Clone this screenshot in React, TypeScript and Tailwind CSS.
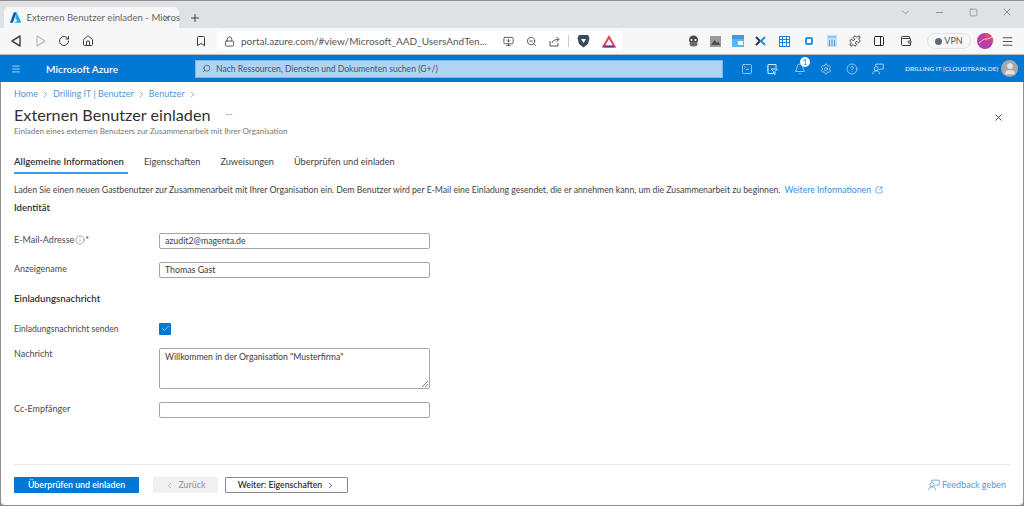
import {
  ChevronDown,
  ChevronLeft,
  ChevronRight,
  Lock,
  Minus,
  Plus,
  RotateCw,
  Search,
  Square,
  X,
  Bookmark,
  Home,
  ZoomOut,
  Settings,
  CircleHelp,
  Bell,
  SquareTerminal,
  Menu,
  Puzzle,
  PanelRight,
  Wallet,
  Check,
  Info,
  SquareArrowOutUpRight,
  User,
  MonitorDown,
} from 'lucide-react';

function Triangle({ filled }: { filled?: boolean }) {
  return (
    <svg width="12" height="14" viewBox="0 0 12 14" fill="none" stroke={filled ? '#c4c6c9' : '#4a4a4a'} strokeWidth="1.5">
      <path d={filled ? 'M2 2 L10 7 L2 12 Z' : 'M10 2 L2 7 L10 12 Z'} strokeLinejoin="round" />
    </svg>
  );
}

function AzureLogo() {
  return (
    <svg width="12" height="11" viewBox="0 0 12 11">
      <path d="M4 0 H7 L3 11 H0 Z" fill="#0a5fb4" />
      <path d="M7 0 L12 11 H4 L7.6 9.2 L5.6 6.2 Z" fill="#2aa4ea" />
    </svg>
  );
}

function FeedbackIcon({ color, size }: { color: string; size: number }) {
  return (
    <svg width={size} height={size} viewBox="0 0 16 16" fill="none" stroke={color} strokeWidth="1">
      <path d="M5 4 V1.5 H15 V8 H11 L9.5 9.5" />
      <circle cx="5.5" cy="7.5" r="2.7" />
      <path d="M1 15 C1 11.5 3 10.5 5.5 10.5 C8 10.5 10 11.5 10 15" />
    </svg>
  );
}

function Field({ label, value, info }: { label: string; value: string; info?: boolean }) {
  return (
    <div className="flex items-center h-[16px]">
      <div className="w-[145px] flex items-center text-[#4a4a4a] -mt-[2px]">
        {label}
        {info && <Info size={10} strokeWidth={1.1} className="ml-[1px]" />}
        {info && <span>*</span>}
      </div>
      <div className="w-[271px] h-[16px] border border-[#a6a6a6] rounded-[2px] px-[5px] flex items-center text-[8.8px] text-[#3b3b3b]">
        {value}
      </div>
    </div>
  );
}

export default function App() {
  return (
    <div
      className="w-[1024px] h-[506px] overflow-hidden bg-[#8f8f8f] pt-px text-[9px] leading-[12px] text-[#333]"
      style={{ fontFamily: 'Lato, "Open Sans", sans-serif' }}
    >
      {/* tab strip */}
      <div className="h-[27px] bg-[#dee1e6] flex items-end pl-[4px]">
        <div className="w-[175px] h-[21px] shrink-0 bg-[#f7f7f7] rounded-t-[5px] flex items-center pl-[6px] pr-[7px]">
          <AzureLogo />
          <span className="ml-[5px] w-[136px] whitespace-nowrap text-[9.6px] text-[#666]">Externen Benutzer einladen - Micros</span>
          <X size={10} className="text-[#555]" />
        </div>
        <Plus size={12} strokeWidth={2} className="ml-[10px] mb-[4px] text-[#3c3c3c]" />
        <div className="ml-auto flex items-center mb-[10px] pr-[11px] text-[#8b8d90]">
          <ChevronDown size={11} className="mr-[23px]" />
          <Minus size={11} className="mr-[24px]" />
          <Square size={9} className="mr-[23px]" />
          <X size={12} />
        </div>
      </div>

      {/* toolbar */}
      <div className="h-[27px] bg-[#f7f7f7] flex items-center pl-[10px] border-b border-[#bdbdbd]">
        <Triangle />
        <span className="ml-[13px]"><Triangle filled /></span>
        <RotateCw size={12} className="ml-[11px] text-[#3c3c3c]" />
        <Home size={12} className="ml-[12px] text-[#3c3c3c]" />
        <Bookmark size={12} className="ml-[101px] text-[#3c3c3c]" />
        <div className="ml-[10px] w-[405px] h-[20px] shrink-0 bg-white rounded-[3px] flex items-center pl-[7px] text-[10px] text-[#555]">
          <Lock size={11} />
          <span className="ml-[6px] w-[248px] whitespace-nowrap">portal.azure.com/#view/Microsoft_AAD_UsersAndTen...</span>
          <MonitorDown size={11} className="ml-[14px]" />
          <ZoomOut size={11} className="ml-[12px]" />
          <svg className="ml-[12px]" width="11" height="11" viewBox="0 0 11 11" fill="none" stroke="#555" strokeWidth="1">
            <path d="M1 5 V10 H9 V7" />
            <path d="M3 7 C3.5 4.5 6 3.5 9.5 3.5 M7.5 1 L10 3.5 L7.5 6" />
          </svg>
          <div className="ml-[8px] w-px h-[12px] bg-[#ccc]" />
          <svg className="ml-[8px]" width="13" height="14" viewBox="0 0 13 14">
            <path d="M2 1 H11 L12.5 4 L11 10 L6.5 13.5 L2 10 L0.5 4 Z" fill="#3c4a55" />
            <path d="M4 5 L6.5 9 L9 5 Z" fill="#fff" />
          </svg>
          <svg className="ml-[12px]" width="14" height="13" viewBox="0 0 14 13" fill="none" strokeWidth="2">
            <path d="M7 2 L12.5 11.5 H1.5 Z" stroke="#e2434b" />
            <path d="M1.5 11.5 H12.5" stroke="#6b3fa0" />
          </svg>
        </div>
        <div className="ml-[65px] flex items-center">
          {/* extensions */}
          <svg width="13" height="12" viewBox="0 0 13 12">
            <circle cx="6.5" cy="5" r="4.5" fill="#4a4a4a" />
            <ellipse cx="6.5" cy="9" rx="4" ry="2.5" fill="#6a6a6a" />
            <circle cx="4.5" cy="5" r="1" fill="#fff" />
            <circle cx="8.5" cy="5" r="1" fill="#fff" />
          </svg>
          <svg className="ml-[10px]" width="11" height="11" viewBox="0 0 11 11">
            <rect width="11" height="11" fill="#9a9a9a" />
            <path d="M1 9 L4.5 4 L7 7 L8.5 5.5 L10 9 Z" fill="#4d4d4d" />
          </svg>
          <div className="ml-[11px] w-[12px] h-[12px] bg-[#5cb5ee] flex flex-col">
            <div className="h-[4px] bg-[#3a9be0]" />
            <div className="ml-auto mt-[2px] mr-px w-[5px] h-[4px] bg-white" />
          </div>
          <svg className="ml-[11px]" width="11" height="10" viewBox="0 0 11 10" fill="none" strokeWidth="2">
            <path d="M1 1 L5 5 L1 9" stroke="#1f3a5f" />
            <path d="M10 1 L6 5 L10 9" stroke="#2e8fd8" />
          </svg>
          <div className="ml-[13px] w-[11px] h-[11px] bg-[#1e7fd6] grid grid-cols-3 gap-px p-px">
            {[0, 1, 2, 3, 4, 5, 6, 7, 8].map((i) => (
              <div key={i} className="bg-white" />
            ))}
          </div>
          <div className="ml-[13px] w-[12px] h-[12px] bg-white flex items-center justify-center">
            <div className="w-[8px] h-[8px] rounded-[2px] border-2 border-[#2196e8]" />
          </div>
          <svg className="ml-[12px]" width="10" height="12" viewBox="0 0 10 12">
            <rect width="10" height="12" fill="#c4def4" />
            <rect x="1" y="1" width="8" height="2" fill="#8fc2ec" />
            <path d="M2 5 H3 V11 H2 Z M4.5 5 H5.5 V11 H4.5 Z M7 5 H8 V11 H7 Z" fill="#5a9fd8" />
          </svg>
          <Puzzle size={12} className="ml-[12px] text-[#3c3c3c]" />
          <PanelRight size={12} className="ml-[12px] text-[#222]" />
          <Wallet size={12} className="ml-[15px] text-[#3c3c3c]" />
          <div className="ml-[15px] w-[44px] h-[16px] rounded-full border border-[#e3e3e3] flex items-center justify-center gap-[2px] text-[#555]">
            <div className="w-[7px] h-[7px] rounded-full bg-[#5f6b7a]" />
            VPN
          </div>
          <svg className="ml-[6px]" width="16" height="16" viewBox="0 0 16 16" fill="none">
            <circle cx="8" cy="8" r="8" fill="#b83fa8" />
            <path d="M8 0 A8 8 0 0 1 16 8 L8 8 Z" fill="#e0457b" />
            <path d="M2 10 C5 8 6 6 9 6 C11 6 13 5 15 4" stroke="#fff" strokeWidth="0.7" />
          </svg>
          <Menu size={13} className="ml-[8px] text-[#555]" />
        </div>
      </div>

      {/* azure bar */}
      <div className="h-[27px] bg-[#0078d4] flex items-center pl-[11px] text-white">
        <Menu size={10} className="text-[#cfe4f7] shrink-0" />
        <span className="ml-[25px] w-[149px] shrink-0 text-[10.2px] font-semibold">Microsoft Azure</span>
        <div className="w-[528px] h-[18px] shrink-0 bg-[#afd3f1] border border-[#7db6e6] flex items-center pl-[6px] text-[8.6px] text-[#44586b]">
          <Search size={9} className="-scale-x-100" />
          <span className="ml-[5px]">Nach Ressourcen, Diensten und Dokumenten suchen (G+/)</span>
        </div>
        <SquareTerminal size={12} strokeWidth={1.3} className="ml-[18px] text-[#d8eafa] shrink-0" />
        <svg className="ml-[13px] shrink-0" width="12" height="12" viewBox="0 0 12 12" fill="none" stroke="#d8eafa" strokeWidth="1">
          <path d="M7 10.5 H2 V1.5 H10 V5" />
          <path d="M2 4 H0.8 M2 7 H0.8" />
          <path d="M5 6 H11.5 L9 8.5 V11.5 L7.5 10.5 V8.5 Z" />
        </svg>
        <div className="relative ml-[16px] shrink-0">
          <Bell size={12} strokeWidth={1.3} className="text-[#d8eafa]" />
          <span className="absolute -top-[6px] left-[6px] w-[10px] h-[10px] rounded-full bg-white text-[#0078d4] text-[7px] leading-[10px] text-center">1</span>
        </div>
        <Settings size={12} strokeWidth={1.3} className="ml-[14px] text-[#d8eafa] shrink-0" />
        <CircleHelp size={12} strokeWidth={1.3} className="ml-[14px] text-[#d8eafa] shrink-0" />
        <span className="ml-[14px]"><FeedbackIcon color="#d8eafa" size={12} /></span>
        <span className="ml-[21px] w-[93px] text-[6.5px] font-semibold whitespace-nowrap text-[#dcebf9]">DRILLING IT (CLOUDTRAIN.DE)</span>
        <div className="ml-[3px] w-[17px] h-[17px] shrink-0 rounded-full bg-[#a8a8a8] flex items-center justify-center overflow-hidden">
          <User size={14} fill="#e3e3e3" className="text-[#e3e3e3]" />
        </div>
      </div>

      {/* blade */}
      <div className="ml-px mr-px h-[423px] bg-white flex flex-col rounded-b-[4px]">
        <div className="pl-[13px] pt-[6px] flex items-center gap-[3px] text-[#4f9ad9]">
          <span>Home</span>
          <ChevronRight size={9} className="text-[#888]" />
          <span>Drilling IT | Benutzer</span>
          <ChevronRight size={9} className="text-[#888]" />
          <span>Benutzer</span>
          <ChevronRight size={9} className="text-[#888]" />
        </div>
        <div className="pl-[13px] pr-[19px] mt-[5px] flex items-center">
          <span className="text-[16.2px] leading-[20px] text-[#323130]">Externen Benutzer einladen</span>
          <span className="ml-[15px] text-[#999] text-[9px] -mt-[3px]">···</span>
          <X size={11} className="ml-auto mt-[4px] text-[#444]" />
        </div>
        <div className="pl-[13px] mt-[1px] text-[8px] leading-[10px] text-[#777]">Einladen eines externen Benutzers zur Zusammenarbeit mit Ihrer Organisation</div>

        <div className="pl-[13px] mt-[20px] flex gap-[20px] text-[9.2px] text-[#444]">
          <div className="pb-[4px] pr-[4px] -mr-[4px] border-b-2 border-[#3f9be3] text-[9.6px] font-semibold text-[#323130]">Allgemeine Informationen</div>
          <div>Eigenschaften</div>
          <div>Zuweisungen</div>
          <div>Überprüfen und einladen</div>
        </div>

        <div className="pl-[13px] mt-[10px] flex items-center whitespace-nowrap text-[8.68px] text-[#444]">
          Laden Sie einen neuen Gastbenutzer zur Zusammenarbeit mit Ihrer Organisation ein. Dem Benutzer wird per E-Mail eine Einladung gesendet, die er annehmen kann, um die Zusammenarbeit zu beginnen.
          <span className="ml-[4px] text-[#3d8fd6]">Weitere Informationen</span>
          <SquareArrowOutUpRight size={8} className="ml-[4px] text-[#3d8fd6]" />
        </div>
        <div className="pl-[13px] mt-[6px] text-[9.5px] font-semibold text-[#323130]">Identität</div>

        <div className="pl-[13px] mt-[19px] flex flex-col">
          <Field label="E-Mail-Adresse" value="azudit2@magenta.de" info />
          <div className="h-[13px]" />
          <Field label="Anzeigename" value="Thomas Gast" />
          <div className="mt-[14px] text-[9.7px] font-semibold text-[#323130]">Einladungsnachricht</div>
          <div className="mt-[18px] flex items-center h-[13px]">
            <div className="w-[145px] text-[8.55px] text-[#4a4a4a]">Einladungsnachricht senden</div>
            <div className="w-[12px] h-[12px] rounded-[1px] bg-[#0078d4] flex items-center justify-center">
              <Check size={9} strokeWidth={1.5} className="text-white" />
            </div>
          </div>
          <div className="mt-[13px] flex items-start">
            <div className="w-[145px] text-[#4a4a4a]">Nachricht</div>
            <div className="relative w-[271px] h-[41px] border border-[#a6a6a6] rounded-[2px] px-[5px] py-[2px] text-[8.7px] text-[#3b3b3b]">
              Willkommen in der Organisation "Musterfirma"
              <svg className="absolute right-px bottom-px" width="6" height="6" viewBox="0 0 6 6" stroke="#555" strokeWidth="0.8">
                <path d="M0 6 L6 0 M3 6 L6 3" />
              </svg>
            </div>
          </div>
          <div className="h-[13px]" />
          <Field label="Cc-Empfänger" value="" />
        </div>

        <div className="mt-auto mx-[13px] border-t border-[#e5e5e5] h-[41px] flex items-center">
          <button className="w-[125px] h-[16px] bg-[#0078d4] rounded-[1px] text-white font-semibold text-[8.8px] leading-[16px]">Überprüfen und einladen</button>
          <button className="ml-[14px] w-[65px] h-[16px] bg-[#f0f0f0] flex items-center justify-center gap-[4px] text-[8.8px] text-[#a0a0a0] font-semibold">
            <ChevronLeft size={9} />
            Zurück
          </button>
          <button className="ml-[7px] w-[123px] h-[16px] border border-[#8a8a8a] rounded-[1px] flex items-center justify-center gap-[4px] text-[8.7px] font-semibold text-[#323130]">
            Weiter: Eigenschaften
            <ChevronRight size={9} />
          </button>
          <div className="ml-auto mr-[4px] flex items-center gap-[2px] text-[#4f9ad9]">
            <FeedbackIcon color="#4f9ad9" size={12} />
            Feedback geben
          </div>
        </div>
      </div>
    </div>
  );
}
